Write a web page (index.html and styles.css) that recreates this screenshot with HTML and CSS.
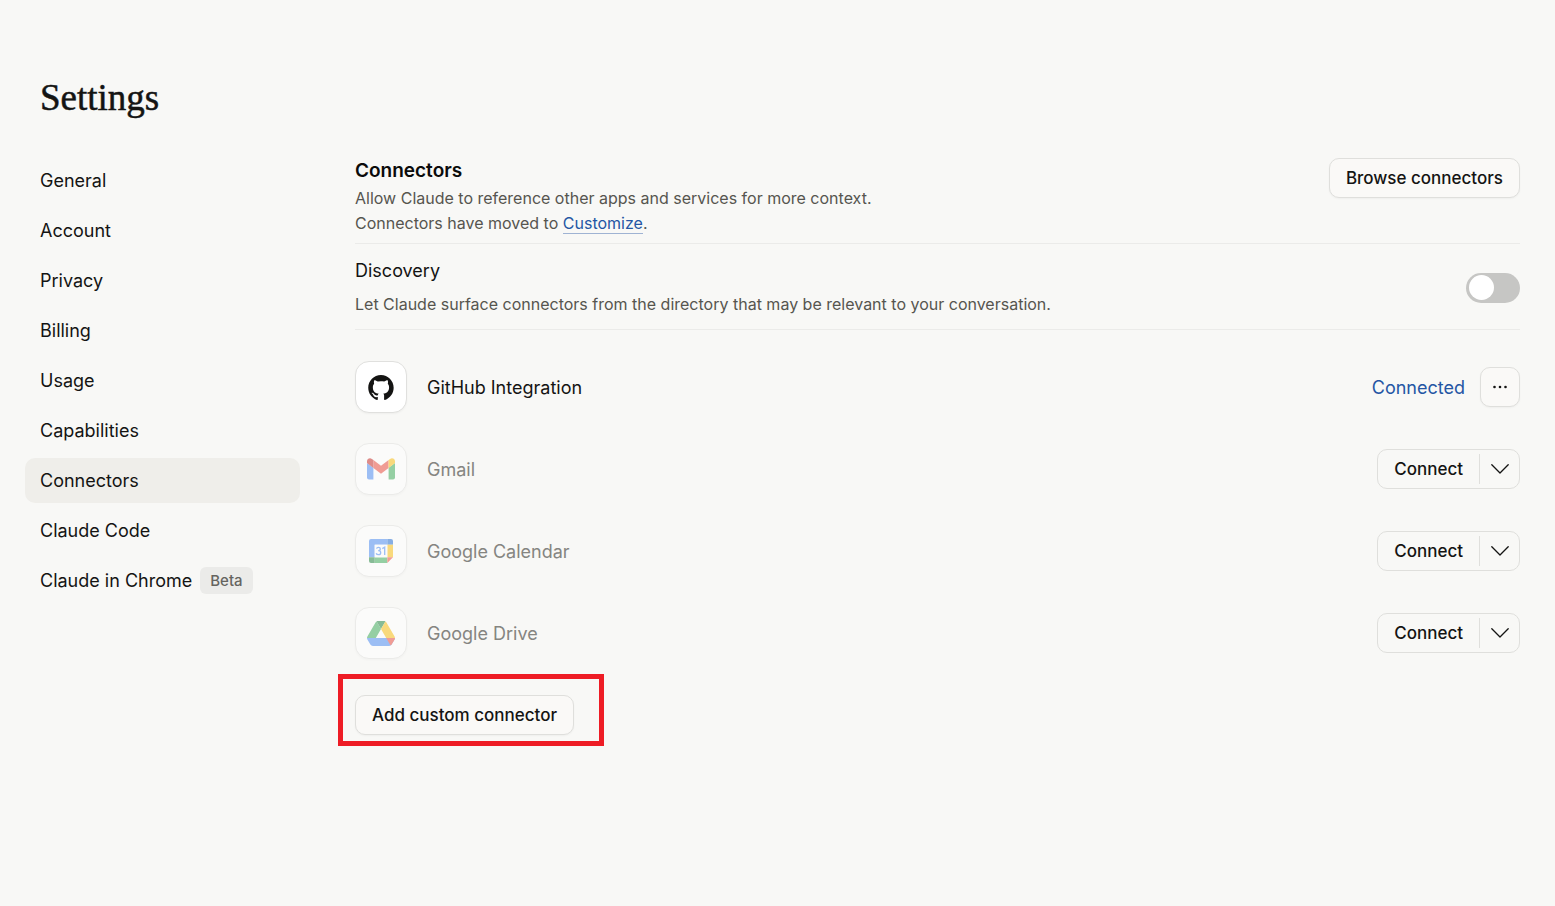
FILE: index.html
```html
<!DOCTYPE html>
<html lang="en">
<head>
<meta charset="utf-8">
<meta name="viewport" content="width=device-width, initial-scale=1">
<title>Settings</title>
<link rel="stylesheet" href="styles.css">
</head>
<body>
<div class="page">
  <h1 class="page-title">Settings</h1>
  <div class="layout">
    <nav class="nav" aria-label="Settings">
      <a class="nav-item" href="#general">General</a>
      <a class="nav-item" href="#account">Account</a>
      <a class="nav-item" href="#privacy">Privacy</a>
      <a class="nav-item" href="#billing">Billing</a>
      <a class="nav-item" href="#usage">Usage</a>
      <a class="nav-item" href="#capabilities">Capabilities</a>
      <a class="nav-item active" href="#connectors" aria-current="page">Connectors</a>
      <a class="nav-item" href="#code">Claude Code</a>
      <a class="nav-item" href="#chrome">Claude in Chrome <span class="badge">Beta</span></a>
    </nav>
    <main class="main">
      <section class="intro">
        <div>
          <h2 class="heading">Connectors</h2>
          <p class="text">Allow Claude to reference other apps and services for more context.<br>Connectors have moved to <a class="link" href="#customize">Customize</a>.</p>
        </div>
        <button class="button" type="button">Browse connectors</button>
      </section>
      <section class="discovery">
        <div>
          <label class="label" for="discovery">Discovery</label>
          <p class="text">Let Claude surface connectors from the directory that may be relevant to your conversation.</p>
        </div>
        <input class="switch" id="discovery" type="checkbox" role="switch">
      </section>
      <ul class="list">
        <li class="row">
          <span class="tile">
            <svg width="26" height="25" viewBox="0 0 98 96" fill="#141413" aria-hidden="true"><path d="M48.854 0C21.839 0 0 22 0 49.217c0 21.756 13.993 40.172 33.405 46.690 2.427.490 3.316-1.059 3.316-2.362 0-1.141-.080-5.052-.080-9.127-13.590 2.934-16.420-5.867-16.420-5.867-2.184-5.704-5.420-7.170-5.420-7.170-4.448-3.015.324-3.015.324-3.015 4.934.326 7.523 5.052 7.523 5.052 4.367 7.496 11.404 5.378 14.235 4.074.404-3.178 1.699-5.378 3.074-6.600-10.839-1.141-22.243-5.378-22.243-24.283 0-5.378 1.940-9.778 5.014-13.200-.485-1.222-2.184-6.275.486-13.038 0 0 4.125-1.304 13.426 5.052a46.970 46.970 0 0 1 12.214-1.630c4.125 0 8.330.571 12.213 1.630 9.302-6.356 13.427-5.052 13.427-5.052 2.670 6.763.970 11.816.485 13.038 3.155 3.422 5.015 7.822 5.015 13.200 0 18.905-11.404 23.060-22.324 24.283 1.780 1.548 3.316 4.481 3.316 9.126 0 6.600-.080 11.897-.080 13.526 0 1.304.890 2.853 3.316 2.364 19.412-6.520 33.405-24.935 33.405-46.691C97.707 22 75.788 0 48.854 0z"/></svg>
          </span>
          <span class="name">GitHub Integration</span>
          <span class="status">Connected</span>
          <button class="button square" type="button" aria-label="More options">
            <svg width="14" height="4" viewBox="0 0 14 4" fill="#141413" aria-hidden="true"><circle cx="1.5" cy="2" r="1.3"/><circle cx="7" cy="2" r="1.3"/><circle cx="12.5" cy="2" r="1.3"/></svg>
          </button>
        </li>
        <li class="row">
          <span class="tile off">
            <svg width="28" height="22" viewBox="0 0 28 22" aria-hidden="true"><path fill="#4285f4" d="M0 5l6.400 4.800V21.500H2a2 2 0 0 1-2-2z"/><path fill="#34a853" d="M21.600 9.800L28 5v14.500a2 2 0 0 1-2 2h-4.400z"/><path fill="#ea4335" d="M6.400 2L14 7.700 21.600 2v8L14 15.700 6.400 10z"/><path fill="#fbbc04" d="M21.600 2l1.500-1.100C25.100-.6 28 .7 28 3.300V5l-6.400 5z"/><path fill="#c5221f" d="M0 5V3.300C0 .7 2.900-.6 4.900.9L6.400 2v8z"/></svg>
          </span>
          <span class="name muted">Gmail</span>
          <span class="split"><button class="split-main" type="button">Connect</button><button class="split-more" type="button" aria-label="Gmail options"><svg width="18" height="10" viewBox="0 0 18 10" fill="none" stroke="#141413" stroke-width="1.300" stroke-linecap="round" stroke-linejoin="round" aria-hidden="true"><path d="M.8.800L9 9 17.200.800"/></svg></button></span>
        </li>
        <li class="row">
          <span class="tile off">
            <svg width="24" height="24" viewBox="0 0 24 24" aria-hidden="true"><path fill="#4285f4" d="M2 0h16.300v5.700H5.700v12.600H0V2a2 2 0 0 1 2-2z"/><path fill="#1967d2" d="M18.300 0H22a2 2 0 0 1 2 2v3.700h-5.700z"/><path fill="#fbbc04" d="M18.300 5.700H24v12.600h-5.700z"/><path fill="#34a853" d="M5.700 18.300h12.600V24H5.700z"/><path fill="#188038" d="M0 18.300h5.700V24H2a2 2 0 0 1-2-2z"/><path fill="#ea4335" d="M18.300 18.300H24L18.300 24z"/><path fill="#fff" d="M5.700 5.700h12.600v12.600H5.700z"/><g fill="none" stroke="#4285f4" stroke-width="1.300"><path d="M7.500 9.600C8 8 11.300 7.900 11.300 10c0 1.200-.9 1.700-2.100 1.700 1.500 0 2.500.7 2.500 2 0 2.600-3.900 2.500-4.500.5M13.300 9.600l2.400-1.500v8"/></g></svg>
          </span>
          <span class="name muted">Google Calendar</span>
          <span class="split"><button class="split-main" type="button">Connect</button><button class="split-more" type="button" aria-label="Google Calendar options"><svg width="18" height="10" viewBox="0 0 18 10" fill="none" stroke="#141413" stroke-width="1.300" stroke-linecap="round" stroke-linejoin="round" aria-hidden="true"><path d="M.8.800L9 9 17.200.800"/></svg></button></span>
        </li>
        <li class="row">
          <span class="tile off">
            <svg width="28" height="25" viewBox="0 0 87.300 78" aria-hidden="true"><path fill="#4285f4" d="M0 53h87.300c0 1.550-.4 3.100-1.200 4.500l-9.250 16c-.8 1.400-1.950 2.500-3.300 3.300-1.350.75-2.900 1.200-4.500 1.200h-50.800c-1.600 0-3.150-.4-4.500-1.200-1.350-.8-2.500-1.900-3.300-3.300l-9.250-16C.4 56.100 0 54.550 0 53z"/><path fill="#34a853" d="m43.650 25-13.750-23.800c-1.350.8-2.500 1.900-3.300 3.300l-25.400 44a9.060 9.060 0 0 0-1.200 4.500h27.500z"/><path fill="#ea4335" d="M73.550 76.800c1.350-.8 2.500-1.900 3.300-3.300l9.250-16c.8-1.400 1.200-2.950 1.200-4.500H59.800z"/><path fill="#188038" d="m43.650 25 13.750-23.800c-1.350-.8-2.900-1.200-4.500-1.200h-18.500c-1.600 0-3.150.45-4.500 1.200z"/><path fill="#fbbc04" d="m73.400 26.500-12.700-22c-.8-1.400-1.950-2.500-3.300-3.300l-13.750 23.800 16.150 28h27.450c0-1.550-.4-3.100-1.200-4.500z"/></svg>
          </span>
          <span class="name muted">Google Drive</span>
          <span class="split"><button class="split-main" type="button">Connect</button><button class="split-more" type="button" aria-label="Google Drive options"><svg width="18" height="10" viewBox="0 0 18 10" fill="none" stroke="#141413" stroke-width="1.300" stroke-linecap="round" stroke-linejoin="round" aria-hidden="true"><path d="M.8.800L9 9 17.200.800"/></svg></button></span>
        </li>
      </ul>
      <div class="custom">
        <button class="button" type="button">Add custom connector</button>
      </div>
    </main>
  </div>
</div>
</body>
</html>
```
FILE: styles.css
```css
* { box-sizing: border-box; }
body {
  margin: 0;
  background: #f8f8f6;
  color: #141413;
  font: 18px/25px Inter, sans-serif;
}
h1, h2, p, ul { margin: 0; padding: 0; }
button { font: inherit; color: inherit; cursor: pointer; }
.page { padding: 78px 35px 40px 25px; }
.page-title {
  padding-left: 15px;
  font: 500 37px/40px "Liberation Serif", serif;
  -webkit-text-stroke: 0.5px #141413;
}
.layout {
  display: grid;
  grid-template-columns: 275px minmax(0, 1fr);
  gap: 55px;
  margin-top: 40px;
}
.nav { display: flex; flex-direction: column; gap: 5px; }
.nav-item {
  display: flex;
  align-items: center;
  gap: 8px;
  height: 45px;
  padding: 0 15px;
  border-radius: 10px;
  color: inherit;
  text-decoration: none;
}
.active { background: #efeeea; }
.badge {
  padding: 0 10px;
  border-radius: 6px;
  background: #ebebe9;
  color: #65645f;
  font-size: 15px;
  font-weight: 500;
  line-height: 27px;
}
.intro, .discovery {
  display: flex;
  justify-content: space-between;
  border-bottom: 1px solid #ebebe9;
}
.intro { align-items: flex-start; padding-bottom: 7px; }
.heading { margin-bottom: 3px; color: #0b0b0b; font-size: 19px; font-weight: 600; line-height: 25px; }
.text { color: #56554f; font-size: 16px; line-height: 25px; }
.link { border-bottom: 1px solid #9fb3d3; color: #2456a4; text-decoration: none; }
.discovery { align-items: center; padding: 14px 0 12px; }
.label { display: block; margin-bottom: 9px; }
.switch {
  flex: none;
  appearance: none;
  width: 54px;
  height: 30px;
  margin: 0;
  padding: 2px 3px;
  border-radius: 15px;
  background: #c6c6c4;
}
.switch::before {
  content: "";
  display: block;
  width: 25px;
  height: 25px;
  border-radius: 50%;
  background: #fff;
}
.switch:checked { padding-left: 26px; background: #2c6fbf; }
.button {
  flex: none;
  height: 40px;
  padding: 0 16px;
  border: 1px solid #dfdfdc;
  border-radius: 10px;
  background: #faf9f7;
  box-shadow: 0 1px 2px #0000000a;
  font-size: 17px;
  font-weight: 500;
}
.square { display: grid; place-items: center; width: 40px; padding: 0; }
.list { display: flex; flex-direction: column; gap: 30px; padding-top: 31px; list-style: none; }
.row { display: flex; align-items: center; }
.tile {
  display: grid;
  place-items: center;
  width: 52px;
  height: 52px;
  margin-right: 20px;
  border: 1px solid #e0e0de;
  border-radius: 14px;
  background: #fff;
  box-shadow: 0 1px 2px #0000000a;
}
.off { opacity: 0.5; }
.name { flex: 1; }
.muted { color: #858581; }
.status { margin-right: 15px; color: #2456a4; }
.split {
  display: flex;
  align-items: center;
  height: 40px;
  border: 1px solid #dfdfdc;
  border-radius: 10px;
}
.split-main, .split-more { height: 30px; border: 0; background: none; }
.split-main { padding: 0 16px; font-size: 17px; font-weight: 500; }
.split-more { display: grid; place-items: center; width: 40px; padding: 0; border-left: 1px solid #dfdfdc; }
.custom { position: relative; width: fit-content; margin-top: 36px; }
.custom .button { display: block; }
.custom::after {
  content: "";
  position: absolute;
  inset: -21px -30px -11px -17px;
  border: 5px solid #ee1c25;
  pointer-events: none;
}
```
